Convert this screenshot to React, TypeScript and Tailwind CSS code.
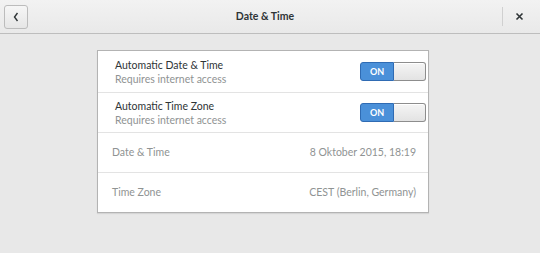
import React from "react";

function Toggle() {
  return (
    <div className="flex h-[19px] w-[66px]">
      <div className="flex w-[34px] items-center justify-center rounded-l-[3px] border border-[#2f6bb3] bg-[#4a90d9] text-[9px] font-bold text-white">ON</div>
      <div className="flex-1 rounded-r-[3px] border border-l-0 border-[#8d8d8d] bg-gradient-to-b from-[#f5f5f5] to-[#e3e3e3] shadow-[inset_0_1px_0_#ffffff]" />
    </div>
  );
}

export default function App() {
  const font = { fontFamily: 'Lato, "Open Sans", sans-serif' };
  return (
    <div className="flex h-[253px] w-[540px] flex-col bg-[#e8e8e8] text-[#2e3436]" style={font}>
      <div className="flex h-[34px] items-center border-b border-[#bdbdbd] bg-gradient-to-b from-[#f2f2f2] to-[#e9e9e9] px-[4px]">
        <div className="flex h-[24px] w-[24px] items-center justify-center rounded-[3px] border border-[#bcbcbc] bg-gradient-to-b from-[#f6f6f6] to-[#e6e6e6]">
          <svg width="10" height="12" viewBox="0 0 10 12">
            <path d="M6.5 2 L3.5 6 L6.5 10" stroke="#2e3436" strokeWidth="1.4" fill="none" />
          </svg>
        </div>
        <div className="flex-1 text-center text-[10.5px] font-bold text-[#2e3436]">Date &amp; Time</div>
        <div className="h-[19px] w-px bg-[#d0d0d0]" />
        <div className="flex w-[33px] items-center justify-center">
          <svg width="9" height="9" viewBox="0 0 9 9">
            <path d="M1.5 1.5 L7.5 7.5 M7.5 1.5 L1.5 7.5" stroke="#2e3436" strokeWidth="1.6" />
          </svg>
        </div>
      </div>
      <div className="flex justify-center pt-[16px]">
        <div className="ml-[-14px] w-[332px] border border-[#b3b3b3] bg-white shadow-[0_1px_1px_rgba(0,0,0,0.08)]">
          <div className="flex h-[42px] items-center justify-between border-b border-[#e3e3e3] pl-[17px] pr-[2px]">
            <div className="flex flex-col leading-[14px]">
              <span className="text-[10.5px] text-[#2e3436]">Automatic Date &amp; Time</span>
              <span className="text-[10.5px] text-[#8f9393]">Requires internet access</span>
            </div>
            <Toggle />
          </div>
          <div className="flex h-[40px] items-center justify-between border-b border-[#e3e3e3] pl-[17px] pr-[2px]">
            <div className="flex flex-col leading-[14px]">
              <span className="text-[10.5px] text-[#2e3436]">Automatic Time Zone</span>
              <span className="text-[10.5px] text-[#8f9393]">Requires internet access</span>
            </div>
            <Toggle />
          </div>
          <div className="flex h-[40px] items-center justify-between border-b border-[#e3e3e3] pl-[14px] pr-[12px] text-[10.5px] text-[#8f9393]">
            <span>Date &amp; Time</span>
            <span>8 Oktober 2015, 18:19</span>
          </div>
          <div className="flex h-[39px] items-center justify-between pl-[14px] pr-[12px] text-[10.5px] text-[#8f9393]">
            <span>Time Zone</span>
            <span>CEST (Berlin, Germany)</span>
          </div>
        </div>
      </div>
    </div>
  );
}
